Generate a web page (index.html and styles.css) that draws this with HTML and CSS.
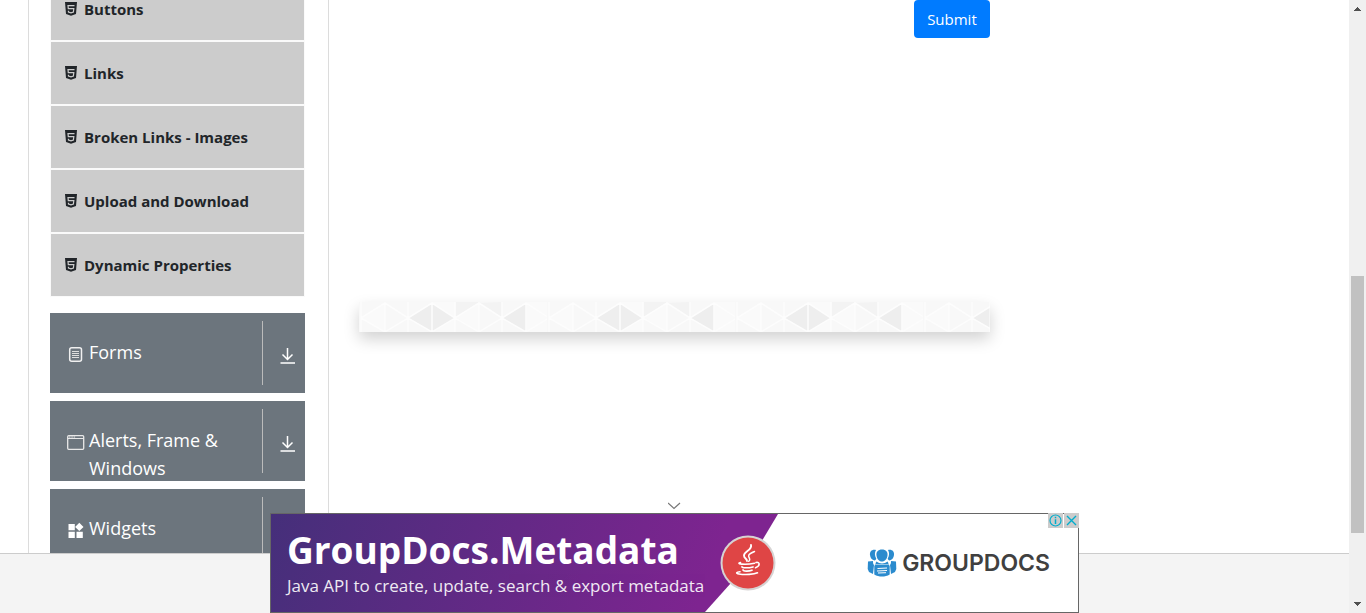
FILE: index.html
```
<!DOCTYPE html>
<html lang="en">
<head>
<meta charset="utf-8">
<title>Elements</title>
<link rel="stylesheet" href="styles.css">
</head>
<body>
<svg class="sprite" aria-hidden="true">
  <symbol id="i-html" viewBox="0 0 12 14">
    <path fill="#212529" d="M0 0h12l-1 12L6 13.800 1 12z"/>
    <path fill="none" stroke="#ccc" stroke-width="1.200" d="M9.500 3.600H3l.3 3h5.500l-.4 3.400L6 10.900l-2.500-.9-.1-1.200"/>
  </symbol>
  <symbol id="i-down" viewBox="0 0 16 16">
    <path fill="none" stroke="#fff" stroke-width="1.500" d="M7.500 0v11.500M2.500 6.500l5 5 5-5M.5 15h14.500"/>
  </symbol>
  <symbol id="i-form" viewBox="0 0 18 18">
    <rect x="2.700" y="2.700" width="11.800" height="13.600" rx="2" fill="none" stroke="#f0f0f0" stroke-width="1.500"/>
    <path stroke="#ddd" d="M5 6.500h7M5 8.500h7M5 10.500h7M5 12.500h7"/>
  </symbol>
  <symbol id="i-window" viewBox="0 0 18 18">
    <rect x=".7" y="2.700" width="16" height="13.600" rx="1" fill="none" stroke="#e8e8e8" stroke-width="1.300"/>
    <path stroke="#e8e8e8" d="M1 5.500h16M2 4h1.500M4.300 4h1.500M6.600 4h1.500"/>
  </symbol>
  <symbol id="i-widgets" viewBox="0 0 18 18">
    <path fill="#fff" d="M1.500 3h6.300v6.200H1.500zM1.500 10.800h6.300V17H1.500zM9.500 10.800h6.300V17H9.500zM12.300 1.700l4.200 4.200-4.200 4.200-4.200-4.200z"/>
  </symbol>
</svg>

<div class="window">
  <div class="page">
    <main class="content">
      <nav class="sidebar" aria-label="Sections">
        <ul class="menu">
          <li><a class="menu-item" href="#buttons"><svg class="icon-html"><use href="#i-html"/></svg>Buttons</a></li>
          <li><a class="menu-item" href="#links"><svg class="icon-html"><use href="#i-html"/></svg>Links</a></li>
          <li><a class="menu-item" href="#broken"><svg class="icon-html"><use href="#i-html"/></svg>Broken Links - Images</a></li>
          <li><a class="menu-item" href="#upload"><svg class="icon-html"><use href="#i-html"/></svg>Upload and Download</a></li>
          <li><a class="menu-item" href="#dynamic"><svg class="icon-html"><use href="#i-html"/></svg>Dynamic Properties</a></li>
        </ul>
        <button class="group" type="button">
          <span class="group-label"><svg class="icon-group"><use href="#i-form"/></svg><span>Forms</span></span>
          <span class="group-toggle"><svg class="icon-down"><use href="#i-down"/></svg></span>
        </button>
        <button class="group" type="button">
          <span class="group-label"><svg class="icon-group"><use href="#i-window"/></svg><span>Alerts, Frame &amp; Windows</span></span>
          <span class="group-toggle"><svg class="icon-down"><use href="#i-down"/></svg></span>
        </button>
        <button class="group" type="button">
          <span class="group-label"><svg class="icon-group"><use href="#i-widgets"/></svg><span>Widgets</span></span>
          <span class="group-toggle"><svg class="icon-down"><use href="#i-down"/></svg></span>
        </button>
      </nav>
      <section class="form-area">
        <button class="submit" type="submit">Submit</button>
        <svg class="strip" aria-hidden="true">
          <defs>
            <pattern id="triangles" width="188" height="30" patternUnits="userSpaceOnUse">
              <path fill="#f8f8f8" d="M0 0h188v30H0z"/>
              <path fill="#fafafa" d="M2 16L26 1v29zM97 16l23-15v29z"/>
              <path fill="#fafafa" d="M73 0h23v30H73zM168 0h20v30h-20z"/>
              <path fill="#f3f3f3" d="M97 0h23L97 15zM120 1l23 15V0z"/>
              <path fill="#eee" d="M50 16L73 1l23 15-23 14zM144 16l23-15v29z"/>
              <path fill="none" stroke="#fdfdfd" stroke-width="1.500" d="M2 0v30M26 0v30M49 0v30M73 0v30M96 0v30M120 0v30M143 0v30M167 0v30M2 16L26 1l23 15L73 1l23 15 24-15 23 15 24-15 23 15M2 16l24 14 23-14 24 14 23-14 24 14 23-14 24 14 23-14"/>
            </pattern>
          </defs>
          <rect width="100%" height="30" fill="url(#triangles)"/>
        </svg>
      </section>
    </main>
    <footer class="footer"></footer>

    <aside class="banner" aria-label="Advertisement">
      <button class="collapse" type="button" aria-label="Collapse"><svg viewBox="0 0 14 8" width="14" height="8"><path fill="none" stroke="#777" stroke-width="1.200" d="M0 1l6 5.500L12 1"/></svg></button>
      <div class="banner-box">
        <a class="promo" href="#metadata">
          <span class="promo-title">GroupDocs.Metadata</span>
          <span class="promo-text">Java API to create, update, search &amp; export metadata</span>
        </a>
        <svg class="java" viewBox="0 0 56 56" role="img" aria-label="Java">
          <circle cx="28" cy="28" r="27.500" fill="#d6d3d3"/>
          <circle cx="28" cy="28" r="25.500" fill="#df4545"/>
          <g fill="none" stroke="#fff" stroke-linecap="round">
            <path stroke-width="1.900" d="M31 10c1.500 5-7 6.500-7 10.500 0 3 3 3 3 5.500"/>
            <path stroke-width="1.500" d="M34.500 16.500c-7 3-6.500 4.500-5 7 .8 1.300.2 2-.8 2.800"/>
            <path stroke-width="1.600" d="M20.500 27.500c-2 .4-2.500 1.300 1 1.600 5 .4 9 0 13-.9M22 31.700c-.5 1.300 6 1.600 11 .2M23 34.800c-.3 1.700 6 1.600 9 .4M36 27.500c4-1 4.500 3.500-.5 5.300M20 36.800c-3.500.2-4.800 1.500-1 2.200 6 1 15 .5 18.500-1.200"/>
          </g>
        </svg>
        <a class="brand" href="#groupdocs">
          <svg class="brand-mark" viewBox="0 0 30 28" aria-hidden="true">
            <g fill="#2b8bce">
              <path d="M9 1C5 0 2.500 2.500 3 6c.3 3 2 5 4.500 5.500 1-.2 1.500-1 1.800-1.800C7.500 6.500 7.500 3.500 9 1zM21 1c4-1 6.500 1.500 6 5-.3 3-2 5-4.500 5.500-1-.2-1.500-1-1.800-1.800C22.500 6.500 22.500 3.500 21 1z"/>
              <path d="M15 .5c4 0 6 2.500 5.500 6S18 12.500 15 12.500 10 10 9.500 6.500 11 .5 15 .5zM9.500 12.500c3 2.500 8 2.500 11 0 .7 1 1 1.700 1 2.500h-13c0-.8.300-1.500 1-2.500z"/>
              <path d="M1 12.500l5-.5c0 2 .2 3 1 4L6 25 2 23 .7 20zM29 12.500l-5-.5c0 2-.2 3-1 4l1 9L28 23l1.300-3z"/>
              <path d="M8 15.500h14l.7 2v8c-4.500 2.700-10.900 2.700-15.400 0v-8z"/>
            </g>
            <path stroke="#fff" d="M10.500 19.500l9.500-.5M10 22l10-.5M11 24l8-.3"/>
          </svg>
          <span>GROUPDOCS</span>
        </a>
        <span class="ad-controls">
          <button type="button" aria-label="Ad information"><svg viewBox="0 0 15 15" width="15" height="15"><circle cx="7.500" cy="7.500" r="5.500" fill="none" stroke="#00aecd" stroke-width="1.200"/><path stroke="#00aecd" stroke-width="1.500" d="M7.500 6.300V11M7.500 3.800v1.400"/></svg></button>
          <button type="button" aria-label="Close ad"><svg viewBox="0 0 15 15" width="15" height="15"><path stroke="#00aecd" stroke-width="1.400" d="M3 3l9 9M12 3l-9 9"/></svg></button>
        </span>
      </div>
    </aside>
  </div>
  <div class="scrollbar" aria-hidden="true">
    <svg viewBox="0 0 17 17" shape-rendering="crispEdges"><path fill="#505050" d="M8 7h1v1h1v1h1v1h1v1H5v-1h1V9h1V8h1z"/></svg>
    <div class="track"><div class="before"></div><div class="thumb"></div><div class="after"></div></div>
    <svg viewBox="0 0 17 17" shape-rendering="crispEdges"><path fill="#505050" d="M5 6h7v1h-1v1h-1v1H9v1H8V9H7V8H6V7H5z"/></svg>
  </div>
</div>
</body>
</html>
```

FILE: styles.css
```
* { box-sizing: border-box; }

body {
  margin: 0;
  font-family: "Open Sans", "Noto Sans", sans-serif;
  font-size: 15px;
  line-height: 24px;
  color: #212529;
  background: #fff;
}

a { color: inherit; text-decoration: none; }
button { font: inherit; border: 0; padding: 0; margin: 0; background: none; cursor: pointer; }
.sprite { display: none; }

.window { display: flex; height: 100vh; overflow: hidden; }

.page {
  position: relative;
  flex: 1;
  min-width: 0;
  display: flex;
  flex-direction: column;
}

.content {
  flex: 1;
  min-height: 0;
  overflow: hidden;
  display: grid;
  grid-template-columns: minmax(0, 3fr) minmax(0, 6fr) minmax(0, 3fr);
  padding: 0 14px;
}

.footer { height: 60px; background: #f4f4f4; border-top: 1px solid #ccc; }

/* Sidebar */
.sidebar {
  margin: 0 15px 0 14px;
  padding: 0 23px 0 21px;
  border: 1px solid #dcdcdc;
  border-width: 0 1px;
}

.menu {
  list-style: none;
  margin: -22px 0 16px;
  padding: 0 1px 1px;
  display: grid;
  gap: 2px;
  background: #fafafa;
}

.menu-item {
  display: flex;
  align-items: center;
  gap: 7px;
  height: 62px;
  padding-left: 14px;
  background: #ccc;
  font-weight: 700;
}

.icon-html { width: 12px; height: 14px; }

.group {
  display: flex;
  width: 100%;
  height: 80px;
  margin-bottom: 8px;
  padding: 8px 0;
  overflow: hidden;
  background: #6c757d;
  color: #fff;
  text-align: left;
  font-size: 18px;
  line-height: 28px;
}

.group-label { flex: 1; display: flex; align-items: flex-start; gap: 4px; padding: 17px 24px 0 17px; }
.icon-group { width: 18px; height: 18px; flex: none; margin-top: 7px; }
.group-toggle { width: 43px; height: 64px; padding: 27px 0 0 17px; border-left: 1px solid #bbb; }
.icon-down { display: block; width: 16px; height: 16px; }

/* Form column */
.form-area { padding: 0 15px; display: flex; flex-direction: column; align-items: flex-end; }
.submit { height: 38px; padding: 0 13px; border-radius: 4px; background: #007bff; color: #fff; }
.strip {
  width: 100%;
  height: 30px;
  margin-top: 264px;
  box-shadow: 0 7px 16px rgba(0, 0, 0, 0.18);
}

/* Bottom banner laid over the page */
.banner { position: absolute; bottom: 0; left: 0; right: 0; display: flex; flex-direction: column; align-items: center; }
.collapse { height: 18px; line-height: 16px; }
.banner-box {
  position: relative;
  display: flex;
  align-items: center;
  width: 809px;
  max-width: 100%;
  height: 100px;
  border: 1px solid #666;
  background: #fff;
}
.promo {
  display: flex;
  flex-direction: column;
  width: 507px;
  height: 98px;
  padding: 10px 0 0 16px;
  color: #fff;
  white-space: nowrap;
  background: linear-gradient(110deg, #452f7a, #7e2490 85%);
  clip-path: polygon(0 0, 100% 0, calc(100% - 30px) 50px, calc(100% - 73px) 100%, 0 100%);
}
.promo-title { font-size: 37px; font-weight: 700; line-height: 52px; }
.promo-text { font-size: 17px; line-height: 20px; opacity: 0.9; }
.java { position: relative; flex: none; width: 56px; height: 56px; margin-left: -58px; }
.brand {
  display: flex;
  align-items: center;
  gap: 5px;
  margin-left: auto;
  padding-right: 28px;
  font: 600 23px/32px Inter, sans-serif;
  color: #404040;
}
.brand-mark { width: 30px; height: 28px; }
.ad-controls { position: absolute; top: -1px; right: -1px; display: flex; gap: 1px; }
.ad-controls button { width: 15px; height: 15px; background: #ccc; }
.ad-controls svg { display: block; }

/* Scrollbar */
.scrollbar { width: 17px; display: flex; flex-direction: column; background: #f0f0f0; }
.scrollbar svg { width: 17px; height: 17px; display: block; }
.track { flex: 1; display: flex; flex-direction: column; padding: 0 2px; }
.before { flex: 259; }
.thumb { flex: 257; background: #c1c1c1; }
.after { flex: 63; }
```
